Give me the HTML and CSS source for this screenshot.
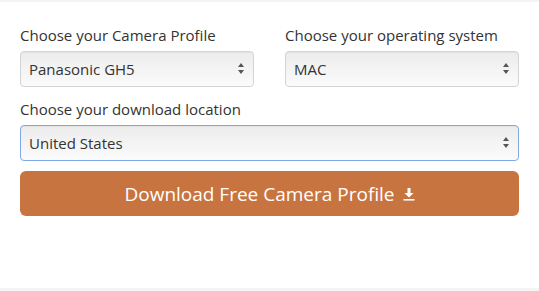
FILE: index.html
```html
<!DOCTYPE html>
<html lang="en">
<head>
  <meta charset="UTF-8">
  <meta name="viewport" content="width=device-width, initial-scale=1.0">
  <title>Download Camera Profile</title>
  <link rel="stylesheet" href="styles.css">
</head>
<body>
  <div class="top-strip"></div>
  <form class="download-form">
    <div class="row">
      <div class="field">
        <label for="camera">Choose your Camera Profile</label>
        <div class="select-wrap">
          <select id="camera">
            <option>Panasonic GH5</option>
          </select>
          <span class="arrows"></span>
        </div>
      </div>
      <div class="field">
        <label for="os">Choose your operating system</label>
        <div class="select-wrap">
          <select id="os">
            <option>MAC</option>
          </select>
          <span class="arrows"></span>
        </div>
      </div>
    </div>
    <div class="field last">
      <label for="location">Choose your download location</label>
      <div class="select-wrap">
        <select id="location" class="focused">
          <option>United States</option>
        </select>
        <span class="arrows"></span>
      </div>
    </div>
    <button type="button" class="download-btn">
      Download Free Camera Profile
      <svg class="dl-icon" width="12" height="13" viewBox="0 0 12 13">
        <path d="M4.5 0h3v5h3L6 9.5 1.5 5h3z" fill="#fff"/>
        <rect x="0.5" y="11" width="11" height="1.6" fill="#fff"/>
      </svg>
    </button>
  </form>
  <div class="bottom-strip"></div>
</body>
</html>
```
FILE: styles.css
```css
* {
  box-sizing: border-box;
}
body {
  margin: 0;
  background: #fff;
  font-family: 'Open Sans', sans-serif;
  color: #333;
}
.top-strip {
  height: 2px;
  background: #f4f4f4;
}
.bottom-strip {
  height: 3px;
  background: #f4f4f4;
}
.download-form {
  padding: 23px 20px 0;
  height: 286px;
}
.row {
  display: grid;
  grid-template-columns: 1fr 1fr;
  gap: 31px;
}
.field {
  margin-bottom: 12px;
}
.field.last {
  margin-bottom: 10px;
}
.field label {
  display: block;
  font-size: 15px;
  line-height: 21px;
  margin-bottom: 5px;
}
.select-wrap {
  position: relative;
}
select {
  appearance: none;
  -webkit-appearance: none;
  width: 100%;
  height: 36px;
  padding: 0 8px;
  font-family: 'Open Sans', sans-serif;
  font-size: 15px;
  color: #333;
  border: 1px solid #d4d4d4;
  border-radius: 4px;
  background: linear-gradient(#ececec, #fbfbfb);
  box-shadow: inset 0 1px 1px rgba(0, 0, 0, 0.04);
}
select.focused {
  border-color: #7fa8e6;
}
.arrows {
  position: absolute;
  right: 9px;
  top: 12px;
  width: 7px;
  height: 11px;
}
.arrows::before,
.arrows::after {
  content: '';
  position: absolute;
  left: 0;
  border-left: 3.5px solid transparent;
  border-right: 3.5px solid transparent;
}
.arrows::before {
  top: 0;
  border-bottom: 4px solid #555;
}
.arrows::after {
  bottom: 0;
  border-top: 4px solid #555;
}
.download-btn {
  display: flex;
  align-items: center;
  justify-content: center;
  gap: 8px;
  width: 100%;
  height: 45px;
  border: none;
  border-radius: 6px;
  background: #c87441;
  color: #fff;
  font-family: 'Open Sans', sans-serif;
  font-size: 19px;
  cursor: pointer;
}
.dl-icon {
  margin-top: 1px;
}
```
